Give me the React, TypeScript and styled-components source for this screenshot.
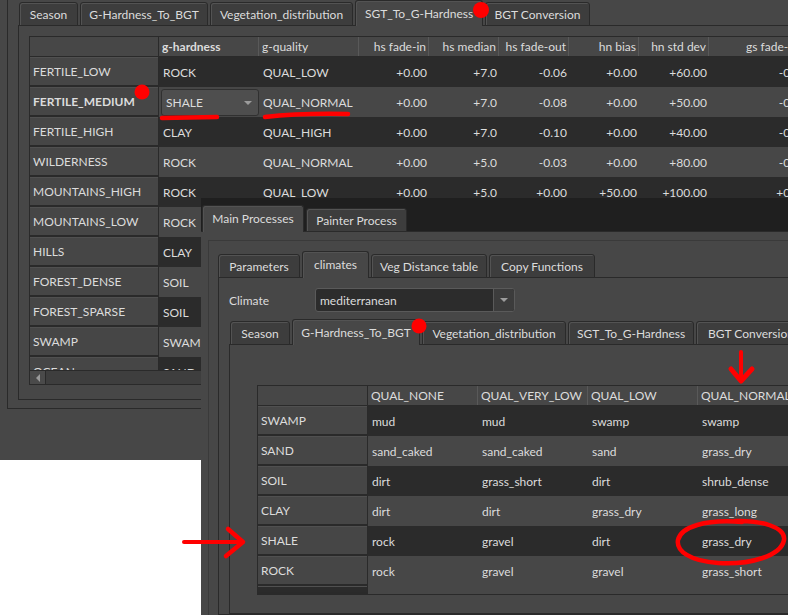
import React from "react";
import styled, { createGlobalStyle } from "styled-components";

const DARK = "#2a2a2a";
const BG = "#474747";
const ROW_DARK = "#2b2b2b";
const TEXT = "#dcdcdc";

const GlobalStyle = createGlobalStyle`
  html, body { margin: 0; padding: 0; background: #ffffff; }
  body { font-family: Lato, "Liberation Sans", sans-serif; font-size: 12px; color: ${TEXT}; }
  * { box-sizing: border-box; }
`;

const Screen = styled.div`
  position: relative;
  width: 788px;
  height: 615px;
  overflow: hidden;
  background: #ffffff;
`;

/* ---------- back window ---------- */
const BackWindow = styled.div`
  width: 788px;
  height: 460px;
  background: ${BG};
  overflow: hidden;
  padding-left: 7px;
`;

const OuterFrame = styled.div`
  width: 900px;
  height: 409px;
  border-left: 1px solid ${DARK};
  border-bottom: 1px solid ${DARK};
  padding: 0 0 8px 10px;
  display: flex;
  flex-direction: column;
`;

/* ---------- tabs ---------- */
const TabBar = styled.div<{ $h: number; $pl?: number }>`
  display: flex;
  align-items: flex-end;
  gap: 2px;
  height: ${(p) => p.$h}px;
  flex: 0 0 ${(p) => p.$h}px;
  padding-left: ${(p) => p.$pl ?? 1}px;
  margin-bottom: -1px;
  position: relative;
  z-index: 1;
`;

const Tab = styled.div<{ $w: number; $active?: boolean; $h?: number }>`
  flex: 0 0 ${(p) => p.$w}px;
  width: ${(p) => p.$w}px;
  height: ${(p) => (p.$h ? p.$h : p.$active ? 26 : 24)}px;
  display: flex;
  align-items: center;
  justify-content: center;
  white-space: nowrap;
  color: ${TEXT};
  background: ${(p) => (p.$active ? BG : "#3d3d3d")};
  border: 1px solid ${DARK};
  border-bottom: ${(p) => (p.$active ? "none" : `1px solid ${DARK}`)};
  border-radius: 3px 3px 0 0;
  box-shadow: inset 1px 1px 0 #535353;
  padding-bottom: ${(p) => (p.$active ? 1 : 0)}px;
`;

const Pane = styled.div<{ $h?: number; $pt: number; $pl: number }>`
  border-top: 1px solid ${DARK};
  border-left: 1px solid ${DARK};
  border-bottom: 1px solid ${DARK};
  background: ${BG};
  ${(p) => (p.$h ? `height: ${p.$h}px;` : "flex: 1;")}
  padding: ${(p) => p.$pt}px 0 0 ${(p) => p.$pl}px;
  display: flex;
  flex-direction: column;
  align-items: flex-start;
  min-height: 0;
`;

/* ---------- tables ---------- */
const TableFrame = styled.div<{ $w: number }>`
  width: ${(p) => p.$w}px;
  flex: 0 0 auto;
  border: 1px solid ${DARK};
  display: flex;
  flex-direction: column;
  background: ${BG};
`;

const Viewport = styled.div<{ $h: number }>`
  height: ${(p) => p.$h}px;
  overflow: hidden;
`;

const GridRow = styled.div<{ $cols: string; $h: number; $dark?: boolean }>`
  display: grid;
  grid-template-columns: ${(p) => p.$cols};
  height: ${(p) => p.$h}px;
  background: ${(p) => (p.$dark ? ROW_DARK : BG)};
`;

const HeaderRow = styled(GridRow)`
  border-bottom: 1px solid ${DARK};
  background: ${BG};
`;

const HeaderCell = styled.div<{ $right?: boolean; $bold?: boolean; $corner?: boolean }>`
  display: flex;
  align-items: center;
  justify-content: ${(p) => (p.$right ? "flex-end" : "flex-start")};
  padding: 0 ${(p) => (p.$right ? 2 : 3)}px 0 3px;
  border-right: 1px solid ${(p) => (p.$corner ? DARK : "#595959")};
  font-weight: ${(p) => (p.$bold ? 700 : 400)};
  white-space: nowrap;
  overflow: hidden;
`;

const VHeadCell = styled.div<{ $bold?: boolean; $dark?: boolean }>`
  display: flex;
  align-items: center;
  padding-left: 3px;
  background: ${(p) => (p.$dark ? ROW_DARK : "#464646")};
  border-right: 1px solid ${DARK};
  border-bottom: 2px solid ${DARK};
  box-shadow: inset 0 1px 0 #505050;
  font-weight: ${(p) => (p.$bold ? 700 : 400)};
  white-space: nowrap;
  overflow: hidden;
`;

const Cell = styled.div<{ $right?: boolean }>`
  display: flex;
  align-items: center;
  justify-content: ${(p) => (p.$right ? "flex-end" : "flex-start")};
  padding: ${(p) => (p.$right ? "0 2px 0 0" : "0 0 0 4px")};
  white-space: nowrap;
  overflow: hidden;
`;

const EditorCell = styled.div`
  display: flex;
  padding: 2px 0 1px 2px;
`;

const Arrow = styled.span`
  width: 0;
  height: 0;
  border-left: 4px solid transparent;
  border-right: 4px solid transparent;
  border-top: 4px solid #9c9c9c;
`;

const CellCombo = styled.div`
  flex: 1;
  display: flex;
  align-items: center;
  justify-content: space-between;
  padding: 0 6px 0 4px;
  background: #4e4e4e;
  border: 1px solid #303030;
  border-radius: 3px;
`;

const ScrollBar = styled.div`
  height: 14px;
  display: flex;
  background: #3e3e3e;
  border-top: 1px solid ${DARK};
`;

const ScrollButton = styled.div`
  width: 16px;
  display: flex;
  align-items: center;
  justify-content: center;
  background: #4a4a4a;
  border-right: 1px solid ${DARK};
`;

const LeftArrow = styled.span`
  width: 0;
  height: 0;
  border-top: 4px solid transparent;
  border-bottom: 4px solid transparent;
  border-right: 4px solid #9a9a9a;
`;

/* ---------- front window ---------- */
const FrontWindow = styled.div`
  position: absolute;
  left: 201px;
  top: 198px;
  width: 587px;
  height: 417px;
  background: #1f1f1f;
  display: flex;
  flex-direction: column;
  overflow: hidden;
  z-index: 2;
`;

const FrontPane = styled.div`
  flex: 1;
  background: ${BG};
  border-top: 1px solid ${DARK};
  padding: 8px 0 0 7px;
  display: flex;
  flex-direction: column;
`;

const GroupFrame = styled.div`
  flex: 1;
  border-left: 1px solid #3a3a3a;
  border-top: 1px solid #3a3a3a;
  padding: 10px 0 0 9px;
  display: flex;
  flex-direction: column;
  width: 700px;
`;

const FormRow = styled.div`
  display: flex;
  align-items: center;
  height: 24px;
  margin-bottom: 7px;
`;

const Label = styled.div`
  width: 86px;
`;

const Combo = styled.div`
  width: 200px;
  height: 24px;
  display: flex;
  background: #2c2c2c;
  border: 1px solid #5a5a5a;
  border-radius: 3px;
  overflow: hidden;
`;

const ComboText = styled.div`
  flex: 1;
  display: flex;
  align-items: center;
  padding-left: 4px;
`;

const ComboButton = styled.div`
  width: 21px;
  display: flex;
  align-items: center;
  justify-content: center;
  background: #3c3c3c;
  border-left: 1px solid #5a5a5a;
`;

const TabWidget = styled.div<{ $w?: number }>`
  display: flex;
  flex-direction: column;
  flex: 1;
  width: ${(p) => p.$w ?? 700}px;
`;

const Overlay = styled.svg`
  position: absolute;
  left: 0;
  top: 0;
  z-index: 10;
  pointer-events: none;
`;

/* ---------- data ---------- */
const backCols = "129px 100px 100px 70px 70px 70px 70px 70px 100px";
const backHeaders = [
  { label: "g-hardness", bold: true },
  { label: "g-quality" },
  { label: "hs fade-in", right: true },
  { label: "hs median", right: true },
  { label: "hs fade-out", right: true },
  { label: "hn bias", right: true },
  { label: "hn std dev", right: true },
  { label: "gs fade-out", right: true },
];

const backRows: [string, string, string, string[]][] = [
  ["FERTILE_LOW", "ROCK", "QUAL_LOW", ["+0.00", "+7.0", "-0.06", "+0.00", "+60.00", "-0.06"]],
  ["FERTILE_MEDIUM", "SHALE", "QUAL_NORMAL", ["+0.00", "+7.0", "-0.08", "+0.00", "+50.00", "-0.12"]],
  ["FERTILE_HIGH", "CLAY", "QUAL_HIGH", ["+0.00", "+7.0", "-0.10", "+0.00", "+40.00", "-0.15"]],
  ["WILDERNESS", "ROCK", "QUAL_NORMAL", ["+0.00", "+5.0", "-0.03", "+0.00", "+80.00", "-0.03"]],
  ["MOUNTAINS_HIGH", "ROCK", "QUAL_LOW", ["+0.00", "+5.0", "+0.00", "+50.00", "+100.00", "+0.00"]],
  ["MOUNTAINS_LOW", "ROCK", "QUAL_LOW", ["+0.00", "+5.0", "+0.00", "+0.00", "+80.00", "+0.00"]],
  ["HILLS", "CLAY", "QUAL_NORMAL", ["+0.00", "+5.0", "-0.03", "+0.00", "+60.00", "-0.03"]],
  ["FOREST_DENSE", "SOIL", "QUAL_HIGH", ["+0.00", "+7.0", "-0.06", "+0.00", "+60.00", "-0.06"]],
  ["FOREST_SPARSE", "SOIL", "QUAL_NORMAL", ["+0.00", "+7.0", "-0.06", "+0.00", "+60.00", "-0.06"]],
  ["SWAMP", "SWAMP", "QUAL_LOW", ["+0.00", "+3.0", "-0.03", "+0.00", "+40.00", "-0.03"]],
  ["OCEAN", "SAND", "QUAL_NONE", ["+0.00", "+0.0", "+0.00", "+0.00", "+0.00", "+0.00"]],
];

const frontCols = "110px 110px 110px 110px 110px 110px";
const frontHeaders = ["QUAL_NONE", "QUAL_VERY_LOW", "QUAL_LOW", "QUAL_NORMAL", "QUAL_HIGH"];
const frontRows: [string, string[]][] = [
  ["SWAMP", ["mud", "mud", "swamp", "swamp", "swamp"]],
  ["SAND", ["sand_caked", "sand_caked", "sand", "grass_dry", "grass_dry"]],
  ["SOIL", ["dirt", "grass_short", "dirt", "shrub_dense", "shrub_dense"]],
  ["CLAY", ["dirt", "dirt", "grass_dry", "grass_long", "grass_long"]],
  ["SHALE", ["rock", "gravel", "dirt", "grass_dry", "grass_dry"]],
  ["ROCK", ["rock", "gravel", "gravel", "grass_short", "grass_short"]],
];

const RED = "#ff0000";

export default function App() {
  return (
    <Screen>
      <GlobalStyle />
      <BackWindow>
        <OuterFrame>
          <TabBar $h={26}>
            <Tab $w={59}>Season</Tab>
            <Tab $w={128}>G-Hardness_To_BGT</Tab>
            <Tab $w={143}>Vegetation_distribution</Tab>
            <Tab $w={128} $active>SGT_To_G-Hardness</Tab>
            <Tab $w={105}>BGT Conversion</Tab>
          </TabBar>
          <Pane $h={375} $pt={10} $pl={10}>
            <TableFrame $w={860}>
              <Viewport $h={333}>
                <HeaderRow $cols={backCols} $h={20}>
                  <HeaderCell $corner />
                  {backHeaders.map((h) => (
                    <HeaderCell key={h.label} $right={h.right} $bold={h.bold}>
                      {h.label}
                    </HeaderCell>
                  ))}
                </HeaderRow>
                {backRows.map(([name, hard, qual, nums], i) => (
                  <GridRow key={name} $cols={backCols} $h={30} $dark={i % 2 === 0}>
                    <VHeadCell $bold={name === "FERTILE_MEDIUM"}>{name}</VHeadCell>
                    {name === "FERTILE_MEDIUM" ? (
                      <EditorCell>
                        <CellCombo>
                          SHALE
                          <Arrow />
                        </CellCombo>
                      </EditorCell>
                    ) : (
                      <Cell>{hard}</Cell>
                    )}
                    <Cell>{qual}</Cell>
                    {nums.map((n, j) => (
                      <Cell key={j} $right>
                        {n}
                      </Cell>
                    ))}
                  </GridRow>
                ))}
              </Viewport>
              <ScrollBar>
                <ScrollButton>
                  <LeftArrow />
                </ScrollButton>
              </ScrollBar>
            </TableFrame>
          </Pane>
        </OuterFrame>
      </BackWindow>

      <FrontWindow>
        <TabBar $h={34}>
          <Tab $w={102} $active $h={27}>
            Main Processes
          </Tab>
          <Tab $w={101}>Painter Process</Tab>
        </TabBar>
        <FrontPane>
          <GroupFrame>
            <TabWidget>
              <TabBar $h={27} $pl={0}>
                <Tab $w={82}>Parameters</Tab>
                <Tab $w={67} $active $h={27}>
                  climates
                </Tab>
                <Tab $w={116}>Veg Distance table</Tab>
                <Tab $w={106}>Copy Functions</Tab>
              </TabBar>
              <Pane $pt={10} $pl={10}>
                <FormRow>
                  <Label>Climate</Label>
                  <Combo>
                    <ComboText>mediterranean</ComboText>
                    <ComboButton>
                      <Arrow />
                    </ComboButton>
                  </Combo>
                </FormRow>
                <TabWidget $w={600}>
                  <TabBar $h={26}>
                    <Tab $w={60}>Season</Tab>
                    <Tab $w={128} $active>
                      G-Hardness_To_BGT
                    </Tab>
                    <Tab $w={144}>Vegetation_distribution</Tab>
                    <Tab $w={126}>SGT_To_G-Hardness</Tab>
                    <Tab $w={110}>BGT Conversion</Tab>
                  </TabBar>
                  <Pane $pt={40} $pl={27}>
                    <TableFrame $w={670}>
                      <HeaderRow $cols={frontCols} $h={20}>
                        <HeaderCell $corner />
                        {frontHeaders.map((h) => (
                          <HeaderCell key={h}>{h}</HeaderCell>
                        ))}
                      </HeaderRow>
                      {frontRows.map(([name, vals], i) => (
                        <GridRow key={name} $cols={frontCols} $h={30} $dark={i % 2 === 0}>
                          <VHeadCell>{name}</VHeadCell>
                          {vals.map((v, j) => (
                            <Cell key={j}>{v}</Cell>
                          ))}
                        </GridRow>
                      ))}
                      <GridRow $cols={frontCols} $h={8}>
                        <VHeadCell $dark />
                      </GridRow>
                    </TableFrame>
                  </Pane>
                </TabWidget>
              </Pane>
            </TabWidget>
          </GroupFrame>
        </FrontPane>
      </FrontWindow>

      <Overlay width={788} height={615} viewBox="0 0 788 615">
        <g fill={RED}>
          <circle cx={481} cy={10} r={8} />
          <circle cx={142} cy={92} r={7.5} />
          <circle cx={419} cy={326} r={7.5} />
        </g>
        <g fill="none" stroke={RED} strokeLinecap="round" strokeLinejoin="round">
          <path d="M162 118 L217 117" strokeWidth={4.5} />
          <path d="M265 117 Q300 113 348 114" strokeWidth={4.5} />
          <path d="M741 352 L741 379" strokeWidth={4} />
          <path d="M731 369 L741 381 L752 369" strokeWidth={5} />
          <path d="M184 542 L240 542" strokeWidth={4} />
          <path d="M228 529 L243 542 L226 556" strokeWidth={4.5} />
          <path
            d="M736 521 C760 520 786 527 784 540 C781 556 750 565 718 563 C690 561 676 551 678 540 C681 527 705 519 742 522"
            strokeWidth={4.5}
          />
        </g>
      </Overlay>
    </Screen>
  );
}
